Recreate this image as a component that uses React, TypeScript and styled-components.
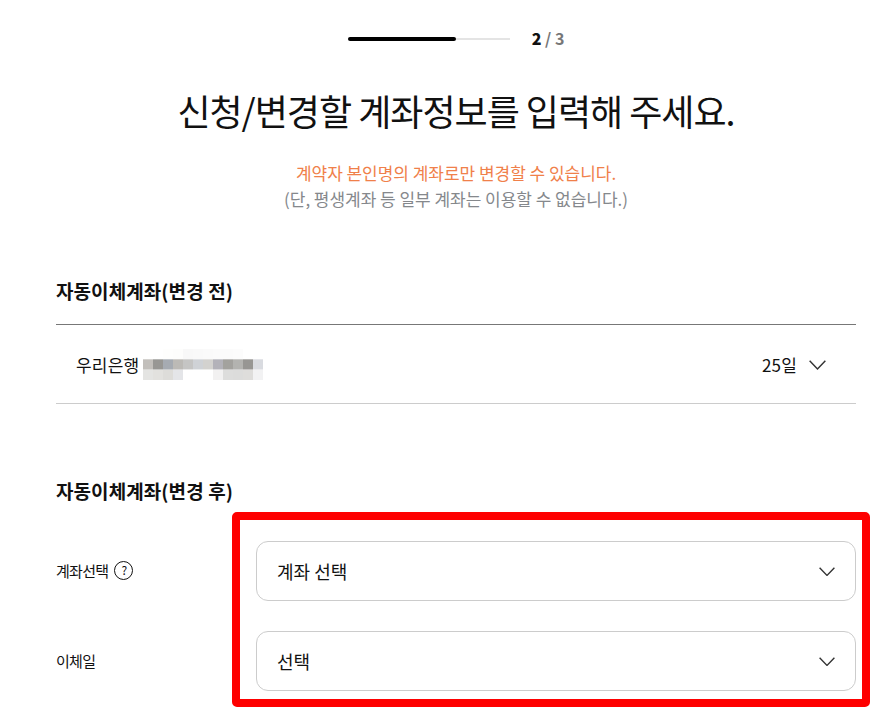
import React from 'react';
import styled, { createGlobalStyle } from 'styled-components';

const GlobalStyle = createGlobalStyle`
  html, body {
    margin: 0;
    padding: 0;
    background: #fff;
    overflow: hidden;
  }
  body {
    font-family: "Noto Sans CJK KR", "Noto Sans", sans-serif;
    color: #111;
  }
`;

const Page = styled.div`
  width: 800px;
  height: 718px;
  margin-left: 56px;
  display: flex;
  flex-direction: column;
`;

const Stepper = styled.div`
  display: flex;
  align-items: center;
  justify-content: center;
  gap: 22px;
  padding-top: 26px;
  height: 24px;
`;

const Track = styled.div`
  display: flex;
  align-items: center;
  width: 162px;
  height: 2px;
  margin-top: 2px;
  background: #e4e4e4;
`;

const TrackFill = styled.div`
  height: 4px;
  flex: none;
  background: #000;
  border-radius: 2px;
`;

const StepText = styled.div`
  font-size: 16px;
  line-height: 24px;
  font-weight: 700;
  color: #777;
  b {
    color: #111;
  }
`;

const Title = styled.h1`
  margin: 35px 0 0;
  font-size: 36px;
  line-height: 50px;
  font-weight: 400;
  letter-spacing: -1px;
  text-align: center;
  color: #111;
`;

const Notice = styled.div`
  margin-top: 25px;
  font-size: 17px;
  line-height: 26px;
  letter-spacing: -0.03px;
  text-align: center;
  color: #85888c;
`;

const NoticeAccent = styled.div`
  color: #f0804a;
`;

const SectionTitle = styled.h2<{ $top: number }>`
  margin: ${({ $top }) => $top}px 0 0;
  font-size: 19px;
  line-height: 28px;
  font-weight: 700;
  letter-spacing: 0.08px;
  color: #111;
`;

const CurrentRow = styled.div`
  margin-top: 19px;
  height: 78px;
  padding: 0 30px 0 20px;
  display: flex;
  align-items: center;
  justify-content: space-between;
  border-top: 1px solid #777;
  border-bottom: 1px solid #ccc;
  font-size: 17px;
  letter-spacing: 0.2px;
`;

const BankInfo = styled.div`
  display: flex;
  align-items: center;
  gap: 4px;
`;

const DueInfo = styled.div`
  display: flex;
  align-items: center;
  gap: 12px;
`;

const Form = styled.div`
  position: relative;
  margin-top: 36px;
  display: flex;
  flex-direction: column;
  gap: 30px;
`;

const FormRow = styled.div`
  display: grid;
  grid-template-columns: 200px 600px;
  align-items: center;
`;

const FieldLabel = styled.div`
  display: flex;
  align-items: center;
  gap: 6px;
  padding-bottom: 2px;
  font-size: 15px;
  letter-spacing: -0.7px;
`;

const HelpBadge = styled.span`
  width: 17px;
  height: 17px;
  border: 1px solid #111;
  border-radius: 50%;
  display: flex;
  align-items: center;
  justify-content: center;
  font-size: 12px;
  line-height: 1;
  color: #111;
`;

const SelectBox = styled.div`
  box-sizing: border-box;
  height: 60px;
  padding: 0 20px 1px;
  display: flex;
  align-items: center;
  justify-content: space-between;
  border: 1px solid #ccc;
  border-radius: 12px;
  font-size: 18px;
  background: #fff;
`;

const Highlight = styled.div`
  position: absolute;
  left: 176px;
  top: -29px;
  width: 638px;
  height: 195px;
  box-sizing: border-box;
  border: 8px solid #fe0000;
  border-radius: 5px;
  pointer-events: none;
`;

const ChevronIcon = styled.svg`
  display: block;
  margin-top: 2px;
`;

const Chevron = ({ size = 16 }: { size?: number }) => (
  <ChevronIcon width={size} height={size * 0.6} viewBox="0 0 16 9.6" fill="none">
    <path d="M0.6 0.8 L8 8.4 L15.4 0.8" stroke="#333" strokeWidth="1.4" />
  </ChevronIcon>
);

// mosaic over the account number
const mosaic = [
  ['#fff', '#fff', '#fefefd', '#fdfdfc', '#f8f8f8', '#f9f9f9', '#fafafa', '#fbfbfb', '#fbfbfb', '#fcfcfc', '#fff', '#fff'],
  ['#c2bfbb', '#989794', '#a6abb2', '#bcbab6', '#c5c5c4', '#cfd2d6', '#d3d2cf', '#b3b2b9', '#a3a29e', '#b3b3b0', '#979693', '#d9dbe0'],
  ['#e4e4e2', '#e2e1de', '#dddcd9', '#e4e5e8', '#fff', '#fff', '#fff', '#f2f1f1', '#dddddc', '#dcdcdb', '#dedddb', '#f2f2f3'],
];

const BlurredNumber = () => (
  <svg width="120" height="31" viewBox="0 0 120 31">
    {mosaic.map((row, y) =>
      row.map((fill, x) => (
        <rect key={`${x}-${y}`} x={x * 10} y={y * 10.3} width="10" height="10.4" fill={fill} />
      ))
    )}
  </svg>
);

export default function App() {
  return (
    <>
      <GlobalStyle />
      <Page>
        <Stepper>
          <Track>
            <TrackFill style={{ width: `${(2 / 3) * 100}%` }} />
          </Track>
          <StepText>
            <b>2</b> / 3
          </StepText>
        </Stepper>

        <Title>신청/변경할 계좌정보를 입력해 주세요.</Title>

        <Notice>
          <NoticeAccent>계약자 본인명의 계좌로만 변경할 수 있습니다.</NoticeAccent>
          (단, 평생계좌 등 일부 계좌는 이용할 수 없습니다.)
        </Notice>

        <SectionTitle $top={65}>자동이체계좌(변경 전)</SectionTitle>
        <CurrentRow>
          <BankInfo>
            우리은행
            <BlurredNumber />
          </BankInfo>
          <DueInfo>
            25일
            <Chevron size={17} />
          </DueInfo>
        </CurrentRow>

        <SectionTitle $top={73}>자동이체계좌(변경 후)</SectionTitle>
        <Form>
          <FormRow>
            <FieldLabel>
              계좌선택
              <HelpBadge>?</HelpBadge>
            </FieldLabel>
            <SelectBox>
              계좌 선택
              <Chevron />
            </SelectBox>
          </FormRow>
          <FormRow>
            <FieldLabel>이체일</FieldLabel>
            <SelectBox>
              선택
              <Chevron />
            </SelectBox>
          </FormRow>
          <Highlight />
        </Form>
      </Page>
    </>
  );
}
